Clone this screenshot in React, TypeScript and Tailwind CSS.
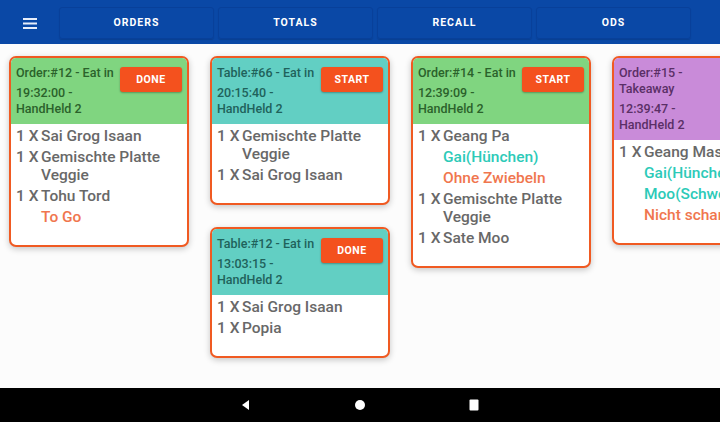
import React from "react";

type Mod = { text: string; color: string };
type Item = { qty: string; name: string; mods?: Mod[] };

interface TicketProps {
  title: string;
  time: string;
  action?: string;
  headerBg: string;
  headerText: string;
  items: Item[];
}

const TEAL = "text-[#2ccab8]";
const ORANGE = "text-[#f0764e]";

const Ticket: React.FC<TicketProps> = ({ title, time, action, headerBg, headerText, items }) => (
  <div className="w-[180px] shrink-0 rounded-[7px] border-2 border-[#f05a22] bg-white overflow-hidden shadow-[0_2px_6px_rgba(0,0,0,0.22)]">
    <div className={`flex justify-between pl-[5px] pr-[5px] pt-[7px] pb-[7px] ${headerBg}`}>
      <div className={`w-[104px] text-[12.5px] font-medium leading-4 ${headerText}`}>
        <div>{title}</div>
        <div className="mt-[4px]">{time}</div>
      </div>
      {/* boton de accion (el ultimo ticket lo tiene fuera de pantalla) */}
      {action && (
        <button className="mt-[2px] w-[62px] h-[25px] shrink-0 rounded-[3px] bg-[#f4511e] text-white text-[10.5px] font-bold tracking-wider shadow-[0_1px_2px_rgba(0,0,0,0.3)]">
          {action}
        </button>
      )}
    </div>
    <div className="px-[5px] pt-[3px] pb-[19px] flex flex-col gap-[3px] text-[15.5px] font-medium leading-[18px] text-[#686868]">
      {items.map((it, i) => (
        <div key={i} className="flex">
          <span className="w-[25px] shrink-0">{it.qty}</span>
          <div className="flex flex-col gap-[3px]">
            <span>{it.name}</span>
            {it.mods?.map((m) => (
              <span key={m.text} className={`whitespace-nowrap ${m.color}`}>
                {m.text}
              </span>
            ))}
          </div>
        </div>
      ))}
    </div>
  </div>
);

const GREEN = { headerBg: "bg-[#80d580]", headerText: "text-[#2b622b]" };
const CYAN = { headerBg: "bg-[#62cfc3]", headerText: "text-[#1f625b]" };
const PURPLE = { headerBg: "bg-[#c98bd9]", headerText: "text-[#5a2f66]" };

export default function App() {
  const tabs = ["ORDERS", "TOTALS", "RECALL", "ODS"];

  return (
    <div className="w-[720px] h-[422px] flex flex-col bg-white overflow-hidden" style={{ fontFamily: "Roboto, 'Liberation Sans', sans-serif" }}>
      <header className="h-[44px] shrink-0 bg-[#0a48a6] flex items-center">
        <div className="w-[59px] pt-[2px] flex items-center justify-center">
          <svg width="14" height="11" viewBox="0 0 14 11" fill="#e8eefa">
            <rect x="0" y="0" width="14" height="2" />
            <rect x="0" y="4.5" width="14" height="2" />
            <rect x="0" y="9" width="14" height="2" />
          </svg>
        </div>
        <nav className="flex gap-[4px] pt-[2px]">
          {tabs.map((t) => (
            <div
              key={t}
              className="w-[155px] h-[32px] flex items-center justify-center rounded-[3px] border border-[#08409a] shadow-[0_1px_1px_rgba(0,0,0,0.12)] text-white text-[10.5px] font-bold tracking-[0.1em]"
            >
              {t}
            </div>
          ))}
        </nav>
      </header>

      <main className="flex-1 flex gap-[21px] pl-[9px] pt-[12px] overflow-hidden bg-[#fcfcfc]">
        <div className="flex flex-col gap-[22px]">
          <Ticket
            title="Order:#12 - Eat in"
            time="19:32:00 - HandHeld 2"
            action="DONE"
            {...GREEN}
            items={[
              { qty: "1 X", name: "Sai Grog Isaan" },
              { qty: "1 X", name: "Gemischte Platte Veggie" },
              { qty: "1 X", name: "Tohu Tord", mods: [{ text: "To Go", color: ORANGE }] },
            ]}
          />
        </div>
        <div className="flex flex-col gap-[22px]">
          <Ticket
            title="Table:#66 - Eat in"
            time="20:15:40 - HandHeld 2"
            action="START"
            {...CYAN}
            items={[
              { qty: "1 X", name: "Gemischte Platte Veggie" },
              { qty: "1 X", name: "Sai Grog Isaan" },
            ]}
          />
          <Ticket
            title="Table:#12 - Eat in"
            time="13:03:15 - HandHeld 2"
            action="DONE"
            {...CYAN}
            items={[
              { qty: "1 X", name: "Sai Grog Isaan" },
              { qty: "1 X", name: "Popia" },
            ]}
          />
        </div>
        <div className="flex flex-col gap-[22px]">
          <Ticket
            title="Order:#14 - Eat in"
            time="12:39:09 - HandHeld 2"
            action="START"
            {...GREEN}
            items={[
              {
                qty: "1 X",
                name: "Geang Pa",
                mods: [
                  { text: "Gai(Hünchen)", color: TEAL },
                  { text: "Ohne Zwiebeln", color: ORANGE },
                ],
              },
              { qty: "1 X", name: "Gemischte Platte Veggie" },
              { qty: "1 X", name: "Sate Moo" },
            ]}
          />
        </div>
        <div className="flex flex-col gap-[22px]">
          <Ticket
            title="Order:#15 - Takeaway"
            time="12:39:47 - HandHeld 2"
            {...PURPLE}
            items={[
              {
                qty: "1 X",
                name: "Geang Massaman",
                mods: [
                  { text: "Gai(Hünchen)", color: TEAL },
                  { text: "Moo(Schwein)", color: TEAL },
                  { text: "Nicht scharf", color: ORANGE },
                ],
              },
            ]}
          />
        </div>
      </main>

      <footer className="h-[34px] shrink-0 bg-black flex items-center justify-center gap-[100px]">
        <svg width="14" height="14" viewBox="0 0 14 14" fill="white">
          <path d="M10 2 L10 12 L3 7 Z" />
        </svg>
        <svg width="14" height="14" viewBox="0 0 14 14" fill="white">
          <circle cx="7" cy="7" r="5" />
        </svg>
        <svg width="14" height="14" viewBox="0 0 14 14" fill="white">
          <rect x="2.5" y="1.5" width="9" height="11" rx="1" />
        </svg>
      </footer>
    </div>
  );
}
